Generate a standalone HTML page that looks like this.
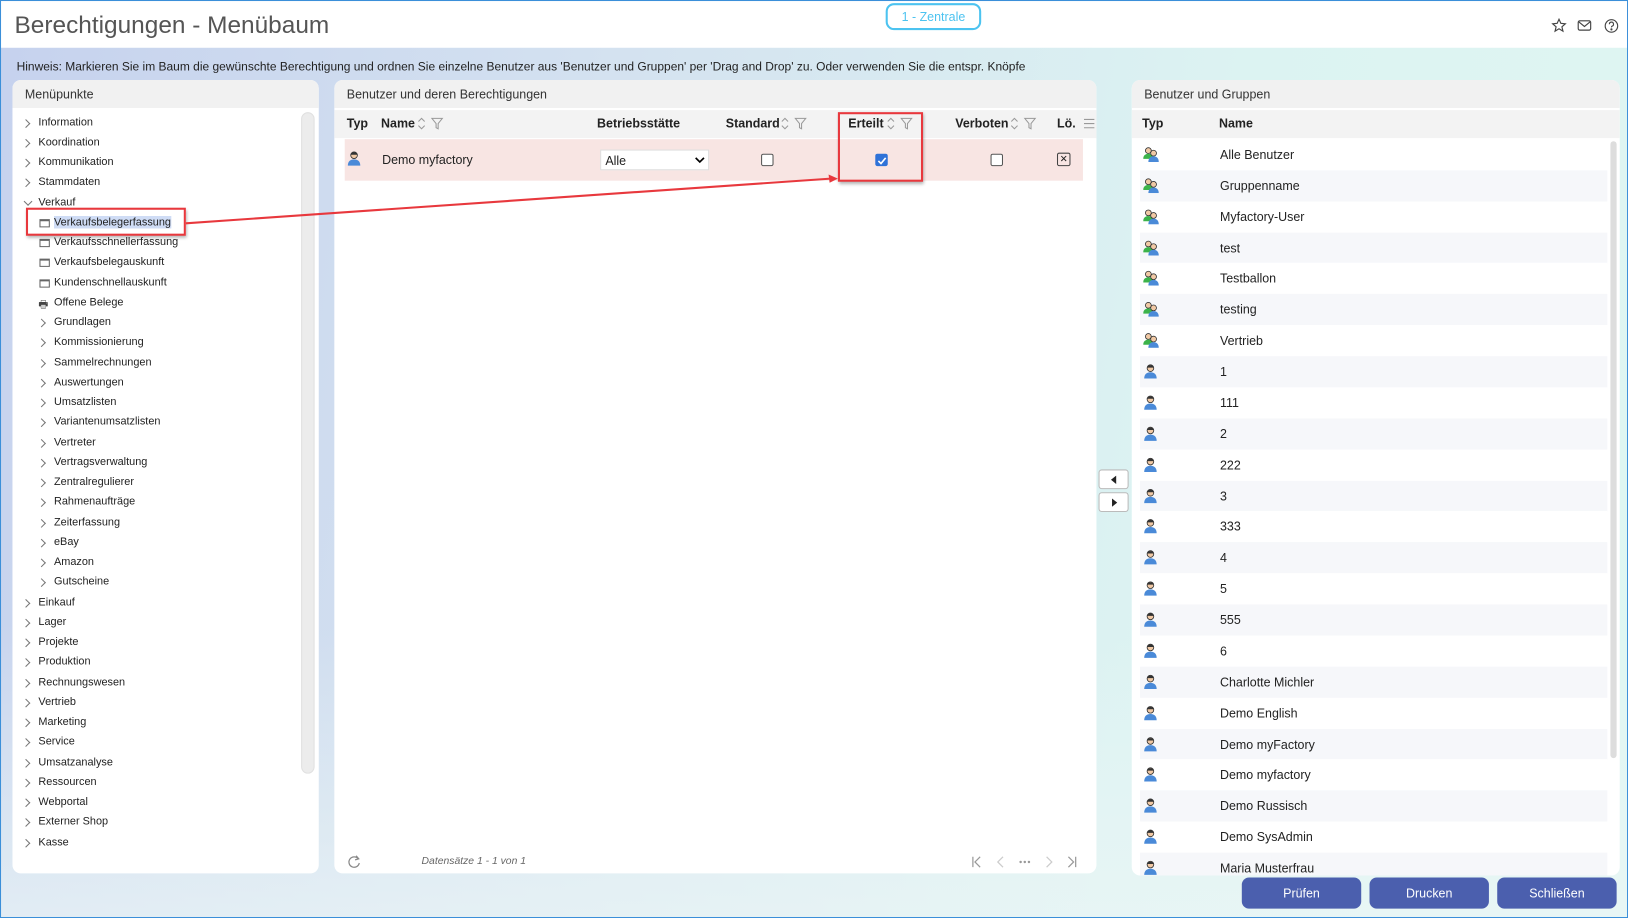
<!DOCTYPE html>
<html><head><meta charset="utf-8"><style>
*{box-sizing:border-box;margin:0;padding:0}
html,body{width:1628px;height:918px;overflow:hidden;background:#fff}
#s{position:absolute;left:0;top:0;width:1568px;height:884px;transform:scale(1.0383,1.0385);transform-origin:0 0;font-family:"Liberation Sans",Arial,sans-serif;color:#222;overflow:hidden}
.a{position:absolute;white-space:nowrap}
.bg{position:absolute;left:0;top:46px;width:1568px;height:838px;background:linear-gradient(100deg,#c6d2ee 0%,#d4e2f0 35%,#dcf3f2 70%,#dff6f2 100%)}
.bg2{position:absolute;left:0;top:600px;width:1568px;height:284px;background:linear-gradient(180deg,rgba(255,255,255,0),rgba(236,246,246,.7))}
.panel{position:absolute;background:#fff;border-radius:8px;overflow:hidden}
.ph{position:absolute;left:0;top:0;right:0;height:27px;background:#f1f1f1;font-size:12px;color:#333;padding:7px 0 0 12px}
.t{font-size:10.5px;color:#222}
.chev{position:absolute;width:6px;height:6px;border-right:1px solid #777;border-bottom:1px solid #777;transform:rotate(-45deg)}
.chevd{transform:rotate(45deg)}
.pg{position:absolute;width:10px;height:8px;border:1px solid #666;border-top-width:2px}
.hb{font-size:12px;font-weight:bold;color:#222}
.cb{position:absolute;width:12px;height:12px;border:1px solid #555;border-radius:2px;background:#fff}
.btn{position:absolute;top:845px;height:30px;width:115px;background:#4b5fae;border-radius:7px;color:#fff;font-size:12px;text-align:center;line-height:30px}
.row{position:absolute;left:1098px;width:450px;height:30px}
.rt{position:absolute;left:1175px;font-size:12px;color:#222}
.ab{position:absolute;left:1058px;width:29px;height:19px;background:#fff;border:1px solid #bbb;border-radius:3px}
</style></head><body><div id="s">
<div class="a" style="left:0;top:0;width:1568px;height:884px;border:1px solid #3b8fd9;z-index:50;pointer-events:none"></div>
<div class="a" style="left:14px;top:11px;font-size:23.5px;color:#555">Berechtigungen - Menübaum</div>
<div class="a" style="left:853px;top:3px;width:92px;height:26px;border:2px solid #4cc3f0;border-radius:8px;color:#4cc3f0;font-size:12px;text-align:center;line-height:22px">1 - Zentrale</div>
<svg class="a" style="left:1494px;top:17px" width="66" height="16" viewBox="0 0 66 16" fill="none" stroke="#444" stroke-width="1.1">
<path d="M7.5 1.5l1.8 4 4.3.4-3.3 2.9 1 4.2-3.8-2.3-3.8 2.3 1-4.2-3.3-2.9 4.3-.4z"/>
<rect x="26" y="3" width="12" height="9" rx="1.5"/><path d="M26.5 4l5.5 4.5 5.5-4.5"/>
<circle cx="58" cy="8" r="6"/><path d="M56 6.3a2 2 0 1 1 2.6 1.9c-.5.2-.6.6-.6 1.2"/><circle cx="58" cy="11.3" r=".5" fill="#444"/>
</svg>
<div class="bg"></div><div class="bg2"></div>
<div class="a" style="left:16px;top:59px;font-size:11.55px;color:#222">Hinweis: Markieren Sie im Baum die gewünschte Berechtigung und ordnen Sie einzelne Benutzer aus 'Benutzer und Gruppen' per 'Drag and Drop' zu. Oder verwenden Sie die entspr. Knöpfe</div>

<div class="panel" style="left:12px;top:77px;width:295px;height:764px">
<div class="ph">Menüpunkte</div>
<div class="a" style="left:278px;top:31px;width:13px;height:637px;background:#ececec;border-radius:7px;border:1px solid #e0e0e0"></div>
</div>
<div id="tree"></div>

<div class="panel" style="left:322px;top:77px;width:734px;height:764px">
<div class="ph">Benutzer und deren Berechtigungen</div>
<div class="a" style="left:0;top:29px;width:734px;height:27px;background:#f3f3f3"></div>
<div class="a" style="left:10px;top:57px;width:711px;height:40px;background:#f8e5e3"></div>
</div>
<div class="a hb" style="left:334px;top:112px">Typ</div>
<div class="a hb" style="left:367px;top:112px">Name</div>
<div class="a hb" style="left:575px;top:112px">Betriebsstätte</div>
<div class="a hb" style="left:699px;top:112px">Standard</div>
<div class="a hb" style="left:817px;top:112px">Erteilt</div>
<div class="a hb" style="left:920px;top:112px">Verboten</div>
<div class="a hb" style="left:1018px;top:112px">Lö.</div>
<svg class="a" style="left:0;top:0" width="1568" height="200" fill="none" stroke="#999" stroke-width="1">
<g id="sf"><path d="M403 117l3-3 3 3M403 121l3 3 3-3"/><path d="M416 114h10l-4 5v5l-2-1v-4z"/></g>
<use href="#sf" x="350"/><use href="#sf" x="452"/><use href="#sf" x="571"/>
<path d="M1044 115h10M1044 119h10M1044 123h10"/>
<path d="M1549 115h10M1549 119h10M1549 123h10"/>
</svg>
<svg class="a" style="left:334px;top:145px" width="14" height="15" viewBox="0 0 14 15"><circle cx="7" cy="4.5" r="3.2" fill="#f1c9a5" stroke="#333" stroke-width=".8"/><path d="M3.8 4c0-3 6.4-3 6.4 0z" fill="#333"/><path d="M1 14.5c0-4 2.5-6 6-6s6 2 6 6z" fill="#4a8ad8"/></svg>
<div class="a" style="left:368px;top:147px;font-size:12px">Demo myfactory</div>
<div class="a" style="left:578px;top:144px;width:105px;height:20px;background:#fff;border:1px solid #ddd;font-size:12px;padding:3px 4px">Alle<svg style="position:absolute;right:3px;top:6px" width="10" height="7"><path d="M1 1l4 4 4-4" fill="none" stroke="#000" stroke-width="1.6"/></svg></div>
<div class="cb" style="left:733px;top:148px"></div>
<div class="cb" style="left:843px;top:148px;background:#2f72d8;border-color:#2f72d8"><svg style="position:absolute;left:1px;top:1px" width="9" height="9"><path d="M1 5l2.5 2.5L8 2" fill="none" stroke="#fff" stroke-width="1.6"/></svg></div>
<div class="cb" style="left:954px;top:148px"></div>
<div class="a" style="left:1018px;top:147px;width:13px;height:13px;border:1px solid #444;border-radius:2px;font-size:9px;line-height:11px;text-align:center">✕</div>
<svg class="a" style="left:334px;top:823px" width="14" height="14"><path d="M11 4A5 5 0 1 0 12 8" fill="none" stroke="#888" stroke-width="1.2"/><path d="M9 1l2.5 3L8 5" fill="none" stroke="#888" stroke-width="1.2"/></svg>
<div class="a" style="left:406px;top:824px;font-size:10px;font-style:italic;color:#666">Datensätze 1 - 1 von 1</div>
<svg class="a" style="left:932px;top:824px" width="110" height="12" fill="none" stroke="#999" stroke-width="1.2"><path d="M5 1v10M12 1l-5 5 5 5"/><path d="M34 1l-5 5 5 5" stroke="#ccc"/><circle cx="51" cy="6" r=".6"/><circle cx="55" cy="6" r=".6"/><circle cx="59" cy="6" r=".6"/><path d="M76 1l5 5-5 5" stroke="#ccc"/><path d="M97 1l5 5-5 5M104 1v10"/></svg>

<div class="ab" style="top:452px"><svg style="position:absolute;left:10px;top:5px" width="8" height="8"><path d="M6 0v8L1 4z" fill="#222"/></svg></div>
<div class="ab" style="top:474px"><svg style="position:absolute;left:11px;top:5px" width="8" height="8"><path d="M1 0v8l5-4z" fill="#222"/></svg></div>

<div class="panel" style="left:1090px;top:77px;width:470px;height:766px">
<div class="ph">Benutzer und Gruppen</div>
<div class="a" style="left:0;top:29px;width:470px;height:27px;background:#f3f3f3"></div>
<div class="a" style="left:461px;top:59px;width:6px;height:594px;background:#ddd;border-radius:3px"></div>
<div id="rl" class="a" style="left:-1090px;top:-77px;width:1568px;height:884px"></div>
</div>
<div class="a hb" style="left:1100px;top:112px">Typ</div>
<div class="a hb" style="left:1174px;top:112px">Name</div>

<div class="btn" style="left:1196px">Prüfen</div>
<div class="btn" style="left:1319px">Drucken</div>
<div class="btn" style="left:1442px">Schließen</div>

<div class="a" style="left:25px;top:200px;width:154px;height:27px;border:2px solid #e8383d;box-shadow:1px 2px 3px rgba(0,0,0,.3);z-index:20"></div>
<div class="a" style="left:807px;top:108px;width:82px;height:67px;border:2px solid #e8383d;box-shadow:1px 2px 3px rgba(0,0,0,.3);z-index:20"></div>
<svg class="a" style="left:0;top:0;z-index:21" width="1568" height="300"><path d="M179 215L800 172" stroke="#e8383d" stroke-width="2"/><path d="M807 172l-9-4 1 8z" fill="#e8383d"/></svg>
</div>
<script>
var T=[[0,"Information"],[0,"Koordination"],[0,"Kommunikation"],[0,"Stammdaten"],[-1,"Verkauf"],[2,"Verkaufsbelegerfassung"],[2,"Verkaufsschnellerfassung"],[2,"Verkaufsbelegauskunft"],[2,"Kundenschnellauskunft"],[3,"Offene Belege"]];
"Grundlagen,Kommissionierung,Sammelrechnungen,Auswertungen,Umsatzlisten,Variantenumsatzlisten,Vertreter,Vertragsverwaltung,Zentralregulierer,Rahmenaufträge,Zeiterfassung,eBay,Amazon,Gutscheine".split(",").forEach(function(n){T.push([1,n])});
"Einkauf,Lager,Projekte,Produktion,Rechnungswesen,Vertrieb,Marketing,Service,Umsatzanalyse,Ressourcen,Webportal,Externer Shop,Kasse".split(",").forEach(function(n){T.push([0,n])});
var h="";T.forEach(function(e,i){var y=111.5+i*19.25,k=e[0];
if(k==0)h+='<div class="chev" style="left:22px;top:'+(y+4)+'px"></div><div class="a t" style="left:37px;top:'+y+'px">'+e[1]+'</div>';
else if(k==-1)h+='<div class="chev chevd" style="left:24px;top:'+(y+2)+'px"></div><div class="a t" style="left:37px;top:'+y+'px">'+e[1]+'</div>';
else if(k==1)h+='<div class="chev" style="left:37px;top:'+(y+4)+'px"></div><div class="a t" style="left:52px;top:'+y+'px">'+e[1]+'</div>';
else if(k==2)h+='<div class="pg" style="left:38px;top:'+(y+3)+'px"></div><div class="a t" style="left:52px;top:'+y+'px;'+(i==5?'background:#cfdcf5;':'')+'">'+e[1]+'</div>';
else h+='<div class="a" style="left:37px;top:'+(y+1)+'px;font-size:10px;color:#444">🖶</div><div class="a t" style="left:52px;top:'+y+'px">'+e[1]+'</div>';});
document.getElementById("tree").innerHTML=h;
var R="Alle Benutzer,Gruppenname,Myfactory-User,test,Testballon,testing,Vertrieb,1,111,2,222,3,333,4,5,555,6,Charlotte Michler,Demo English,Demo myFactory,Demo myfactory,Demo Russisch,Demo SysAdmin,Maria Musterfrau".split(",");
var u='<svg width="14" height="15" viewBox="0 0 14 15"><circle cx="7" cy="4.5" r="3.2" fill="#f1c9a5" stroke="#333" stroke-width=".8"/><path d="M3.8 4c0-3 6.4-3 6.4 0z" fill="#333"/><path d="M1 14.5c0-4 2.5-6 6-6s6 2 6 6z" fill="#4a8ad8"/></svg>';
var g='<svg width="16" height="15" viewBox="0 0 16 15"><circle cx="5" cy="4" r="2.8" fill="#f1c9a5" stroke="#333" stroke-width=".8"/><path d="M0 12c0-3 2-5 5-5s5 2 5 5z" fill="#3cb34a"/><circle cx="10" cy="6.5" r="2.8" fill="#f1c9a5" stroke="#333" stroke-width=".8"/><path d="M5 15c0-3.5 2-5.5 5-5.5s5 2 5 5.5z" fill="#4a8ad8"/></svg>';
h="";R.forEach(function(n,i){var y=134+i*29.87;
h+='<div class="row" style="top:'+y+'px;background:'+(i%2?'#f6f7fa':'#fff')+'"></div><div class="a" style="left:1101px;top:'+(y+7)+'px">'+(i<7?g:u)+'</div><div class="a rt" style="top:'+(y+8)+'px">'+n+'</div>';});
document.getElementById("rl").innerHTML=h;
</script>
</body></html>
